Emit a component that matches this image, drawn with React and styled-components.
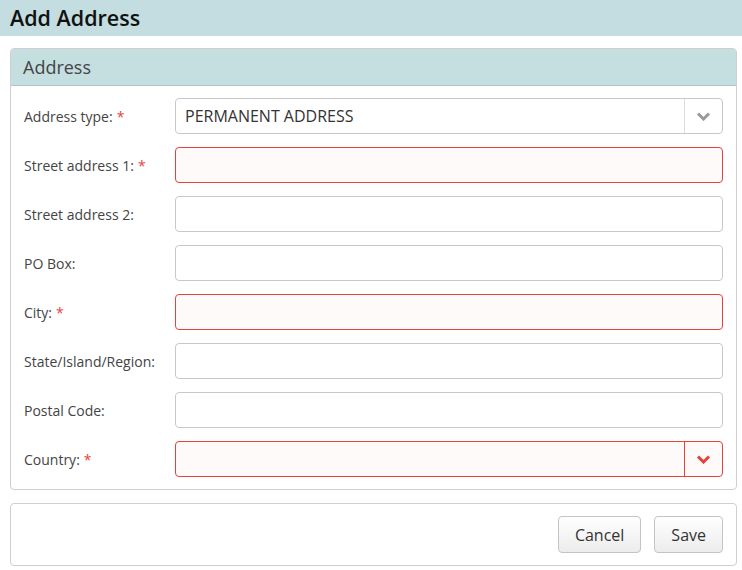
import React from "react";
import styled, { createGlobalStyle } from "styled-components";

const GlobalStyle = createGlobalStyle`
  body {
    margin: 0;
    background: #fff;
    font-family: "Open Sans", "Liberation Sans", sans-serif;
    color: #333;
  }
`;

const fields = [
  { label: "Address type:", required: true, type: "select", value: "PERMANENT ADDRESS" },
  { label: "Street address 1:", required: true, error: true },
  { label: "Street address 2:" },
  { label: "PO Box:" },
  { label: "City:", required: true, error: true },
  { label: "State/Island/Region:" },
  { label: "Postal Code:" },
  { label: "Country:", required: true, type: "select", error: true },
];

const Chevron = ({ color }) => (
  <svg width="15" height="10" viewBox="0 0 15 10">
    <path d="M2 2.5 L7.5 8 L13 2.5" fill="none" stroke={color} strokeWidth="3" />
  </svg>
);

const App = () => {
  return (
    <>
      <GlobalStyle />
      <TitleBar>Add Address</TitleBar>
      <Content>
        <Panel>
          <PanelHeader>Address</PanelHeader>
          <PanelBody>
            {fields.map((f) => (
              <Row key={f.label}>
                <Label>
                  {f.label}
                  {f.required && <Star>*</Star>}
                </Label>
                {f.type === "select" ? (
                  <SelectBox $error={f.error}>
                    <SelectValue>{f.value}</SelectValue>
                    <SelectArrow $error={f.error}>
                      <Chevron color={f.error ? "#e8413a" : "#999"} />
                    </SelectArrow>
                  </SelectBox>
                ) : (
                  <TextInput $error={f.error} />
                )}
              </Row>
            ))}
          </PanelBody>
        </Panel>
        <Footer>
          <Button>Cancel</Button>
          <Button>Save</Button>
        </Footer>
      </Content>
    </>
  );
};

// styled components
const TitleBar = styled.div`
  height: 36px;
  line-height: 36px;
  padding-left: 10px;
  background: #c3dde0;
  font-size: 21.5px;
  font-weight: 600;
  color: #111;
`;

const Content = styled.div`
  display: flex;
  flex-direction: column;
  gap: 13px;
  padding: 12px 5px 0 10px;
`;

const Panel = styled.div`
  border: 1px solid #cfcfcf;
  border-radius: 4px;
  overflow: hidden;
`;

const PanelHeader = styled.div`
  height: 36px;
  line-height: 36px;
  padding-left: 12px;
  background: #c5dfe1;
  border-bottom: 1px solid #a8c8cb;
  font-size: 18px;
  color: #444;
`;

const PanelBody = styled.div`
  display: flex;
  flex-direction: column;
  gap: 13px;
  padding: 12px 13px;
`;

const Row = styled.div`
  display: flex;
  align-items: center;
  height: 36px;
`;

const Label = styled.div`
  width: 151px;
  flex-shrink: 0;
  font-size: 14px;
  color: #444;
`;

const Star = styled.span`
  color: #e8413a;
  margin-left: 4px;
`;

const TextInput = styled.input`
  flex: 1;
  height: 36px;
  box-sizing: border-box;
  border: 1px solid ${(p) => (p.$error ? "#e8413a" : "#c8c8c8")};
  background: ${(p) => (p.$error ? "#fffafa" : "#fff")};
  border-radius: 4px;
  outline: none;
`;

const SelectBox = styled.div`
  flex: 1;
  display: flex;
  height: 36px;
  box-sizing: border-box;
  border: 1px solid ${(p) => (p.$error ? "#e8413a" : "#c8c8c8")};
  background: ${(p) => (p.$error ? "#fffafa" : "#fff")};
  border-radius: 4px;
`;

const SelectValue = styled.div`
  flex: 1;
  padding-left: 9px;
  line-height: 34px;
  font-size: 16px;
  color: #333;
`;

const SelectArrow = styled.div`
  width: 37px;
  display: flex;
  align-items: center;
  justify-content: center;
  border-left: 1px solid ${(p) => (p.$error ? "#e8413a" : "#ddd")};
`;

const Footer = styled.div`
  display: flex;
  justify-content: flex-end;
  gap: 13px;
  padding: 12px 13px;
  border: 1px solid #cfcfcf;
  border-radius: 4px;
`;

const Button = styled.button`
  height: 37px;
  padding: 0 16px;
  font-family: inherit;
  font-size: 16px;
  color: #333;
  background: linear-gradient(#fff, #ececec);
  border: 1px solid #c4c4c4;
  border-radius: 4px;
`;

export default App;
